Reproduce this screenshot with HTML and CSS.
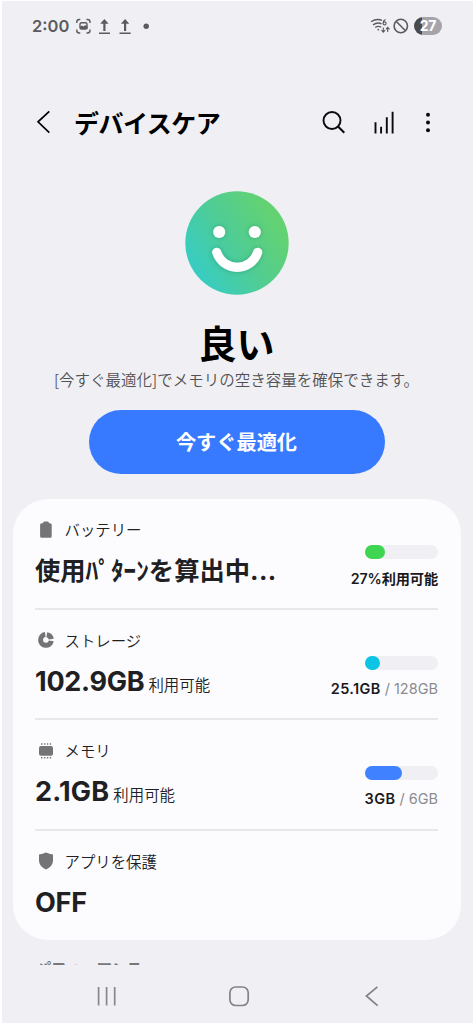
FILE: index.html
```html
<!DOCTYPE html>
<html lang="ja">
<head>
<meta charset="utf-8">
<title>デバイスケア</title>
<link rel="stylesheet" href="styles.css">
</head>
<body>
<div class="screen">
  <header class="status">
    <span class="time">2:00</span>
    <svg class="status-left" width="78" height="20" viewBox="74 16 78 20" fill="none" stroke="#5b5b5e" stroke-width="1.4">
      <path d="M76.800 23v-1q0-2.500 2.500-2.500h1M86.500 19.500h1q2.500 0 2.500 2.500v1M90 29.500v1q0 2.500-2.500 2.500h-1M80.300 33h-1q-2.500 0-2.500-2.500v-1"/>
      <rect x="80" y="22.800" width="7" height="6.200" rx="1.500" stroke-width="1.400"/>
      <path d="M80 29v-2l2-1.500 1.500 1 2-1.500 2 2v2z" fill="#5b5b5e" stroke="none"/>
      <path d="M104.400 31v-10M125.100 31v-10" stroke-width="2.200"/>
      <path d="M100.200 23.700l4.200-4.700 4.200 4.700zM120.900 23.700l4.200-4.700 4.200 4.700z" fill="#5b5b5e" stroke="none"/>
      <path d="M99 33.200h11M119.500 33.200h11.200" stroke-width="1.500"/>
      <circle cx="146.200" cy="26.200" r="2.700" fill="#5b5b5e" stroke="none"/>
    </svg>
    <svg class="status-right" width="40" height="20" viewBox="370 16 40 20" fill="none" stroke="#5b5b5e" stroke-width="1.300">
      <path d="M371 21.800q5.500-3.700 11-1.500M373 24.900q4.500-3.200 8.500-1M375.200 27.500q3-2.200 6-.2"/>
      <circle cx="378.300" cy="29.600" r=".9" fill="#5b5b5e" stroke="none"/>
      <circle cx="384.600" cy="23.400" r="1.500" stroke-width="1.100"/>
      <path d="M383.100 23.200q0-2.600 2.400-3.600" stroke-width="1.100"/>
      <path d="M383.300 27.500v4.500M381.500 30.200l1.800 1.900 1.800-1.900M387.700 32v-4.500M385.900 29.300l1.800-1.900 1.800 1.900" stroke-width="1.100"/>
      <circle cx="400.800" cy="26" r="6.700" stroke-width="1.600"/>
      <path d="M396.100 21.300l9.400 9.400" stroke-width="1.600"/>
    </svg>
    <span class="charge">27</span>
  </header>

  <div class="appbar">
    <svg class="back" width="16" height="26" viewBox="36 110 16 26" fill="none" stroke="#000" stroke-width="1.700"><path d="M49.300 112.300L38 122.800l11.300 10.800"/></svg>
    <h1 class="title">デバイスケア</h1>
    <svg class="tools" width="116" height="28" viewBox="320 108 116 28" fill="none" stroke="#0a0a0a">
      <circle cx="332" cy="120.500" r="8.500" stroke-width="1.900"/>
      <path d="M338 126.600l6.300 6.100" stroke-width="2.100"/>
      <path d="M375.500 122.200v11.200M381.100 126.700v6.700M386.800 117.300v16.100M392.600 111.700v21.700" stroke-width="1.900"/>
      <g fill="#0a0a0a" stroke="none"><circle cx="428" cy="114.700" r="2"/><circle cx="428" cy="122.400" r="2"/><circle cx="428" cy="130.200" r="2"/></g>
    </svg>
  </div>

  <section class="summary">
    <svg class="face" width="104" height="104" viewBox="0 0 104 104">
      <defs>
        <linearGradient id="skin" x1=".12" y1=".78" x2=".9" y2=".3"><stop offset="0" stop-color="#38ccc0"/><stop offset=".5" stop-color="#50cd94"/><stop offset="1" stop-color="#64d272"/></linearGradient>
        <filter id="soft" x="-30%" y="-30%" width="160%" height="160%"><feDropShadow dx="0" dy="0" stdDeviation="2.500" flood-color="#176c55" flood-opacity=".4"/></filter>
      </defs>
      <circle cx="52" cy="52" r="51.700" fill="url(#skin)"/>
      <g filter="url(#soft)">
        <circle cx="34.200" cy="41" r="6.100" fill="#fff"/><circle cx="69.800" cy="41" r="6.100" fill="#fff"/>
        <path d="M31.700 61.300C38.500 81.300 65.900 81.300 72.700 61.300" fill="none" stroke="#fff" stroke-width="9.200" stroke-linecap="round"/>
      </g>
    </svg>
    <h2 class="grade">良い</h2>
    <p class="hint">[今すぐ最適化]でメモリの空き容量を確保できます。</p>
    <button class="optimize">今すぐ最適化</button>
  </section>

  <main class="card">
    <section class="row">
      <div class="info">
        <div class="label"><svg width="20" height="20" viewBox="0 0 20 20" fill="#747477"><path d="M7 3.200Q7 1.500 8.500 1.500h3Q13 1.500 13 3.200h1.200q1.500 0 1.500 1.500v11.600q0 1.500-1.500 1.500H5.600q-1.500 0-1.500-1.500V4.700q0-1.500 1.500-1.500z"/></svg><span>バッテリー</span></div>
        <div class="value"><span class="pattern">使用ﾊﾟﾀｰﾝを算出中<span class="dots">...</span></span></div>
      </div>
      <div class="meter"><div class="bar"><div class="fill green" style="width:27%"></div></div><div class="usage tight"><b>27%<span class="jp">利用可能</span></b></div></div>
    </section>
    <section class="row">
      <div class="info">
        <div class="label"><svg width="20" height="20" viewBox="0 0 20 20" fill="none" stroke="#747477" stroke-width="5"><path d="M9.300 4.600A5.400 5.400 0 1 0 15.300 10.900M10.800 4.700A5.400 5.400 0 0 1 15.300 9.200"/></svg><span>ストレージ</span></div>
        <div class="value"><span class="num">102.9GB</span><span class="unit">利用可能</span></div>
      </div>
      <div class="meter"><div class="bar"><div class="fill cyan" style="width:20%"></div></div><div class="usage"><b>25.1GB</b> / 128GB</div></div>
    </section>
    <section class="row">
      <div class="info">
        <div class="label"><svg width="20" height="20" viewBox="0 0 20 20" fill="#747477"><rect x="3" y="5" width="14" height="9.800" rx="2"/><path d="M5 3.100h10.500M5 16.800h10.500" stroke="#747477" stroke-width="1.500" stroke-dasharray="1.400 1.500"/></svg><span>メモリ</span></div>
        <div class="value"><span class="num wide">2.1GB</span><span class="unit">利用可能</span></div>
      </div>
      <div class="meter"><div class="bar"><div class="fill blue" style="width:51%"></div></div><div class="usage"><b>3GB</b> / 6GB</div></div>
    </section>
    <section class="row">
      <div class="info">
        <div class="label"><svg width="20" height="20" viewBox="0 0 20 20" fill="#747477"><path d="M10 1.500q3.300 1.700 7 2v6.300q0 5.500-7 8.700-7-3.200-7-8.700V3.500q3.700-.3 7-2z"/></svg><span>アプリを保護</span></div>
        <div class="value"><span class="num">OFF</span></div>
      </div>
    </section>
  </main>

  <div class="peek">パフォーマンス</div>

  <nav class="navbar">
    <svg width="22" height="22" viewBox="96 985 22 22" stroke="#88888b" stroke-width="1.700"><path d="M98.600 987v18.500M106.600 987v18.500M114.700 987v18.500"/></svg>
    <svg width="22" height="22" viewBox="228 985 22 22" fill="none" stroke="#838386" stroke-width="1.700"><rect x="229.900" y="987" width="18.300" height="18.500" rx="5.800"/></svg>
    <svg width="16" height="22" viewBox="364 985 16 22" fill="none" stroke="#838386" stroke-width="1.700"><path d="M377.400 986.800L366.400 996l11.200 9.700"/></svg>
  </nav>
</div>
</body>
</html>
```
FILE: styles.css
```css
* { box-sizing: border-box; }
body {
  margin: 0;
  padding: 1px 0 1px 2px;
  background: #fff;
  font-family: Inter, "Noto Sans CJK JP", sans-serif;
  color: #202023;
}
h1, h2, p { margin: 0; }
svg { display: block; flex: none; }
.screen {
  height: 1022px;
  overflow: hidden;
  background: #f0f0f4;
  display: flex;
  flex-direction: column;
}
.status {
  height: 50px;
  flex: none;
  padding: 0 31px 0 30px;
  display: flex;
  align-items: center;
}
.time { width: 42px; font-size: 16.5px; font-weight: 600; color: #5b5b5e; }
.status-right { margin-left: auto; }
.charge {
  margin-left: 4px;
  width: 28px;
  height: 18px;
  border-radius: 9px;
  background: linear-gradient(90deg, #4a4a4d 27%, #a5a5a9 27%);
  color: #fff;
  font-size: 14px;
  font-weight: 700;
  line-height: 18px;
  letter-spacing: -0.3px;
  text-align: center;
}
.appbar {
  height: 142px;
  flex: none;
  padding: 0 37px 0 34px;
  display: flex;
  align-items: center;
}
.title {
  margin-left: 22px;
  font: 700 25px/36px "Noto Sans CJK JP", sans-serif;
  letter-spacing: -0.5px;
  color: #000;
}
.tools { margin-left: auto; }
.summary {
  height: 306px;
  flex: none;
  padding-right: 2px;
  display: flex;
  flex-direction: column;
  align-items: center;
  font-family: "Noto Sans CJK JP", sans-serif;
}
.face { margin-top: -2px; }
.grade { margin-top: 22px; height: 51px; font-size: 38px; line-height: 50px; color: #000; }
.hint { height: 22px; font-size: 15.5px; line-height: 22px; font-weight: 350; color: #525255; white-space: nowrap; }
.optimize {
  margin-top: 20px;
  width: 296px;
  height: 64px;
  border: 0;
  border-radius: 32px;
  background: #387aff;
  color: #fff;
  font: 700 20.200px/30px "Noto Sans CJK JP", sans-serif;
}
.card {
  height: 441px;
  flex: none;
  margin: 0 12.500px 0 10.500px;
  padding: 0 22.500px;
  border-radius: 35px;
  background: #fcfcff;
}
.row {
  height: 110.500px;
  display: flex;
  justify-content: space-between;
  border-bottom: 2px solid #e8e8eb;
}
.row:last-child { border-bottom: 0; }
.info { padding-top: 19px; }
.label {
  height: 22px;
  padding-left: 1px;
  display: flex;
  align-items: center;
  gap: 8.500px;
  font: 350 15.4px/22px "Noto Sans CJK JP", sans-serif;
}
.label svg { margin-top: 1px; }
.value { height: 40px; margin-top: 11px; display: flex; align-items: baseline; line-height: 40px; white-space: nowrap; }
.num { font-size: 27px; font-weight: 700; letter-spacing: -0.25px; }
.wide { letter-spacing: 0.2px; }
.unit { margin-left: 4px; font-family: "Noto Sans CJK JP", sans-serif; font-size: 15.4px; font-weight: 350; }
.pattern { margin-top: -2px; font: 700 25.300px/40px "Noto Sans CJK JP", sans-serif; }
.dots { font-family: Inter, sans-serif; letter-spacing: 0.4px; }
.meter { padding-top: 46px; display: flex; flex-direction: column; align-items: flex-end; }
.bar { width: 73px; height: 14px; border-radius: 7px; background: #f0f0f4; }
.fill { height: 14px; border-radius: 7px; }
.green { background: #3dd551; }
.cyan { background: #0dc4e5; }
.blue { background: #3f81ff; }
.usage { margin-top: 8px; font-size: 14.5px; line-height: 22px; color: #8b8b8e; white-space: nowrap; }
.usage b { font-weight: 600; letter-spacing: 0.35px; color: #19191c; }
.tight b { font-size: 14.200px; letter-spacing: -0.1px; }
.jp { font-family: "Noto Sans CJK JP", sans-serif; font-weight: 700; }
.peek {
  height: 25px;
  flex: none;
  overflow: hidden;
  padding: 16px 0 0 34px;
  font: 700 15.2px/22px "Noto Sans CJK JP", sans-serif;
  color: #77777a;
}
.navbar {
  height: 57px;
  flex: none;
  padding: 4px 93px 0 94px;
  display: grid;
  grid-template-columns: 22px 22px 16px;
  column-gap: 110px;
  align-items: center;
}
.navbar svg:last-child { margin-left: 4px; }
```
